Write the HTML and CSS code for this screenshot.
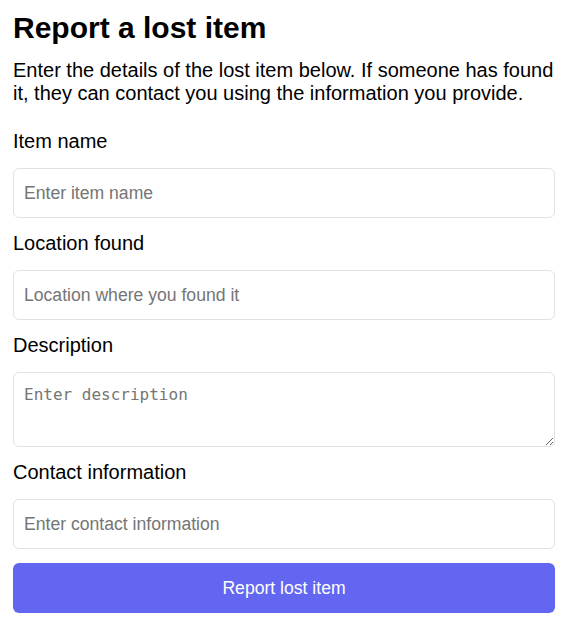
FILE: index.html
```html
<!DOCTYPE html>
<html lang="en">
<head>
<meta charset="utf-8">
<title>Report a lost item</title>
<link rel="stylesheet" href="styles.css">
</head>
<body>
<main class="page">
  <h1 class="title">Report a lost item</h1>
  <p class="intro">Enter the details of the lost item below. If someone has found it, they can contact you using the information you provide.</p>
  <form class="form">
    <div class="field">
      <label class="label" for="name">Item name</label>
      <input class="input" id="name" type="text" placeholder="Enter item name">
    </div>
    <div class="field">
      <label class="label" for="loc">Location found</label>
      <input class="input" id="loc" type="text" placeholder="Location where you found it">
    </div>
    <div class="field">
      <label class="label" for="desc">Description</label>
      <textarea class="textarea" id="desc" placeholder="Enter description"></textarea>
    </div>
    <div class="field">
      <label class="label" for="contact">Contact information</label>
      <input class="input" id="contact" type="text" placeholder="Enter contact information">
    </div>
    <button class="button" type="button">Report lost item</button>
  </form>
</main>
</body>
</html>
```

FILE: styles.css
```css
* { box-sizing: border-box; }
html, body { margin: 0; padding: 0; background: #fff; }
body {
  font-family: "Liberation Sans", Arial, sans-serif;
  color: #000;
}
.page {
  width: 542px;
  margin: 0 0 0 13px;
  padding-top: 10px;
}
.title {
  margin: 0;
  font-size: 30px;
  font-weight: 700;
  line-height: 35px;
}
.intro {
  margin: 14px 0 0;
  font-size: 20px;
  line-height: 23px;
}
.form {
  display: flex;
  flex-direction: column;
  gap: 14px;
  margin-top: 25px;
}
.field {
  display: flex;
  flex-direction: column;
}
.label {
  font-size: 20px;
  line-height: 23px;
  margin-bottom: 15px;
}
.input {
  height: 50px;
  padding: 0 10px;
  border: 1px solid #e2e2e2;
  border-radius: 6px;
  font-family: "Liberation Sans", Arial, sans-serif;
  font-size: 17.6px;
  color: #000;
  background: #fff;
  outline: none;
}
.input::placeholder, .textarea::placeholder { color: #757575; }
.textarea {
  height: 75px;
  padding: 12px 10px 10px;
  border: 1px solid #e2e2e2;
  border-radius: 6px;
  font-family: monospace;
  font-size: 16px;
  background: #fff;
  outline: none;
}
.button {
  height: 50px;
  border: 0;
  border-radius: 6px;
  background: #6366f1;
  color: #fff;
  font-family: "Liberation Sans", Arial, sans-serif;
  font-size: 17.6px;
  cursor: pointer;
}
```
